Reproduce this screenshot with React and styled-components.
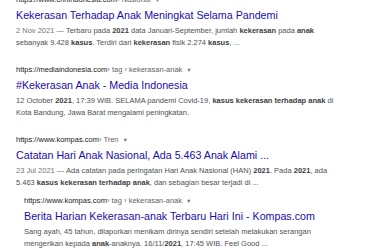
import React from 'react';
import styled, { createGlobalStyle } from 'styled-components';

const GlobalStyle = createGlobalStyle`
  html, body {
    margin: 0;
    padding: 0;
    background: #fff;
    overflow: hidden;
  }
  body {
    font-family: "Liberation Sans", Arial, sans-serif;
  }
`;

const Page = styled.div`
  width: 380px;
  height: 250px;
  overflow: hidden;
`;

const List = styled.div`
  display: flex;
  flex-direction: column;
  margin-top: -6px;
  padding-left: 16px;
`;

const Result = styled.div`
  display: flex;
  flex-direction: column;
  margin-top: ${p => (p.$grouped ? '6px' : '15px')};
  padding-left: ${p => (p.$grouped ? '8px' : '0')};
  &:first-child {
    margin-top: 0;
  }
`;

const Cite = styled.div`
  display: flex;
  align-items: center;
  height: 12px;
  font-size: 7.5px;
  line-height: 12px;
  color: #202124;
  white-space: nowrap;
`;

const Path = styled.span`
  color: #5f6368;
`;

const Caret = styled.span`
  margin-left: 4px;
  font-size: 5.5px;
  color: #70757a;
`;

const Title = styled.a`
  margin-top: 2px;
  font-size: 10.7px;
  line-height: 14px;
  color: #1a0dab;
  text-decoration: none;
  white-space: nowrap;
`;

const Snippet = styled.div`
  margin-top: 3px;
  font-size: 7.5px;
  line-height: 12px;
  color: #4d5156;
`;

const Line = styled.div`
  white-space: nowrap;
`;

const Date = styled.span`
  color: #70757a;
`;

const B = styled.b`
  font-weight: bold;
  color: #3c4043;
`;

const results = [
  {
    domain: 'https://www.cnnindonesia.com',
    path: ' › Nasional',
    title: 'Kekerasan Terhadap Anak Meningkat Selama Pandemi',
    lines: [
      <><Date>2 Nov 2021 — </Date>Terbaru pada <B>2021</B> data Januari-September, jumlah <B>kekerasan</B> pada <B>anak</B></>,
      <>sebanyak 9.428 <B>kasus</B>. Terdiri dari <B>kekerasan</B> fisik 2.274 <B>kasus</B>, ...</>,
    ],
  },
  {
    domain: 'https://mediaindonesia.com',
    path: ' › tag › kekerasan-anak',
    title: '#Kekerasan Anak - Media Indonesia',
    lines: [
      <>12 October <B>2021</B>, 17:39 WIB. SELAMA pandemi Covid-19, <B>kasus kekerasan terhadap anak</B> di</>,
      <>Kota Bandung, Jawa Barat mengalami peningkatan.</>,
    ],
  },
  {
    domain: 'https://www.kompas.com',
    path: ' › Tren',
    title: 'Catatan Hari Anak Nasional, Ada 5.463 Anak Alami ...',
    lines: [
      <><Date>23 Jul 2021 — </Date>Ada catatan pada peringatan Hari Anak Nasional (HAN) <B>2021</B>. Pada <B>2021</B>, ada</>,
      <>5.463 <B>kasus kekerasan terhadap anak</B>, dan sebagian besar terjadi di ...</>,
    ],
  },
  {
    domain: 'https://www.kompas.com',
    path: ' › tag › kekerasan-anak',
    title: 'Berita Harian Kekerasan-anak Terbaru Hari Ini - Kompas.com',
    grouped: true,
    lines: [
      <>Sang ayah, 45 tahun, dilaporkan menikam dirinya sendiri setelah melakukan serangan</>,
      <>mengerikan kepada <B>anak</B>-anaknya. 16/11/<B>2021</B>, 17:45 WIB. Feel Good ...</>,
    ],
  },
];

export default function App() {
  return (
    <Page>
      <GlobalStyle />
      <List>
        {results.map((r, i) => (
          <Result key={i} $grouped={r.grouped}>
            <Cite>
              {r.domain}
              <Path>{r.path}</Path>
              <Caret>▼</Caret>
            </Cite>
            <Title href="#">{r.title}</Title>
            <Snippet>
              {r.lines.map((l, j) => (
                <Line key={j}>{l}</Line>
              ))}
            </Snippet>
          </Result>
        ))}
      </List>
    </Page>
  );
}
